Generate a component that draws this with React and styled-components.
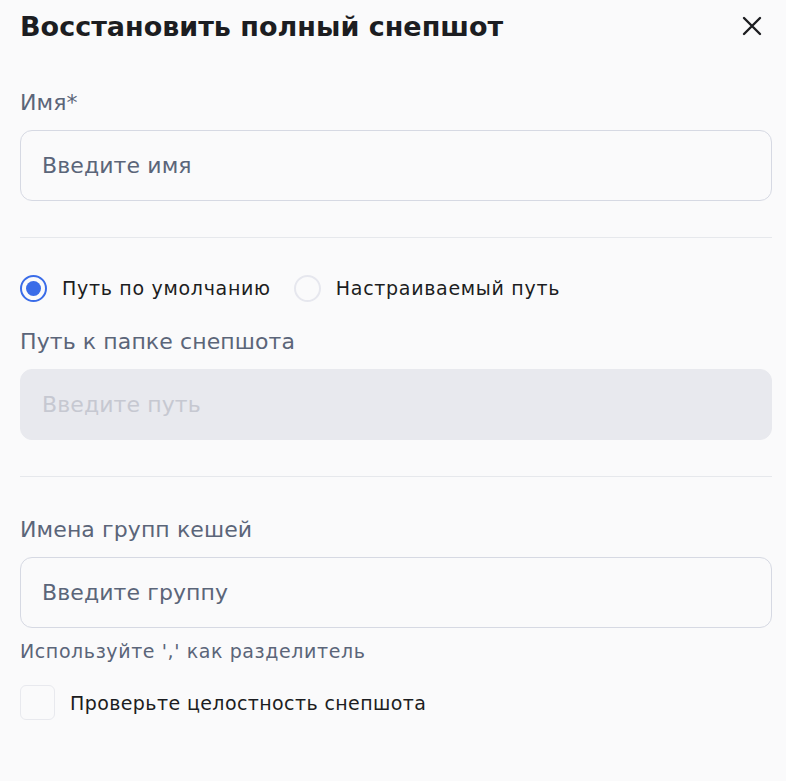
import { useState } from "react";
import styled, { createGlobalStyle } from "styled-components";

const GlobalStyle = createGlobalStyle`
  html, body {
    margin: 0;
    padding: 0;
    background: #fafafb;
    font-family: "DejaVu Sans", "Open Sans", sans-serif;
  }
`;

const Dialog = styled.div`
  width: 786px;
  min-height: 781px;
  box-sizing: border-box;
  padding: 0 14px 0 20px;
  background: #fafafb;
`;

const Header = styled.div`
  display: flex;
  align-items: center;
  justify-content: space-between;
  height: 52px;
`;

const Title = styled.h2`
  margin: 0;
  font-size: 27px;
  font-weight: 700;
  color: #1c1d21;
`;

const CloseButton = styled.button`
  display: flex;
  align-items: center;
  justify-content: center;
  width: 40px;
  height: 40px;
  padding: 0;
  border: none;
  background: none;
  color: #1c1d21;
  cursor: pointer;
`;

const Field = styled.div`
  display: flex;
  flex-direction: column;
  margin-top: ${(p) => p.$top || 0}px;
`;

const Label = styled.label`
  font-size: 22px;
  letter-spacing: 0.1px;
  color: #5b6579;
  line-height: 28px;
  margin-bottom: 13px;
`;

const Input = styled.input`
  box-sizing: border-box;
  width: 100%;
  height: 71px;
  padding: 0 21px;
  border: 1px solid ${(p) => (p.disabled ? "#e8e9ee" : "#d6d9e3")};
  border-radius: 12px;
  background: ${(p) => (p.disabled ? "#e8e9ee" : "#fafafb")};
  font-family: inherit;
  font-size: 22px;
  letter-spacing: 0.1px;
  outline: none;

  &::placeholder {
    color: ${(p) => (p.disabled ? "#c6c8d1" : "#5b6579")};
  }
`;

const Divider = styled.hr`
  margin: ${(p) => p.$top}px 0 0;
  border: none;
  border-top: 1px solid #e6e8ec;
`;

const RadioGroup = styled.div`
  display: flex;
  align-items: center;
  gap: 23px;
  margin-top: 36px;
  height: 28px;
`;

const RadioOption = styled.label`
  display: flex;
  align-items: center;
  gap: 15px;
  font-size: 19px;
  letter-spacing: 0.7px;
  color: #1c1d21;
  cursor: pointer;
`;

const RadioDot = styled.span`
  box-sizing: border-box;
  width: 27px;
  height: 27px;
  border-radius: 50%;
  border: 2px solid ${(p) => (p.$checked ? "#3a6ce8" : "#e6e7ee")};
  display: flex;
  align-items: center;
  justify-content: center;

  &::after {
    content: "";
    width: 15px;
    height: 15px;
    border-radius: 50%;
    background: ${(p) => (p.$checked ? "#3a6ce8" : "transparent")};
  }
`;

const Hint = styled.div`
  margin-top: 12px;
  font-size: 19px;
  letter-spacing: 0.6px;
  line-height: 22px;
  color: #5b6579;
`;

const CheckRow = styled.label`
  display: flex;
  align-items: center;
  gap: 15px;
  margin-top: 23px;
  font-size: 19px;
  letter-spacing: 0.4px;
  color: #1c1d21;
  cursor: pointer;
`;

const CheckBox = styled.span`
  box-sizing: border-box;
  width: 35px;
  height: 35px;
  border: 1.5px solid #e8e9ee;
  border-radius: 6px;
  background: #fafafb;
`;

const App = () => {
  const [mode, setMode] = useState("default");

  return (
    <>
      <GlobalStyle />
      <Dialog>
        <Header>
          <Title>Восстановить полный снепшот</Title>
          <CloseButton aria-label="close">
            <svg width="20" height="20" viewBox="0 0 20 20" fill="none">
              <path
                d="M2 2L18 18M18 2L2 18"
                stroke="currentColor"
                strokeWidth="2.4"
                strokeLinecap="round"
              />
            </svg>
          </CloseButton>
        </Header>

        <Field $top={37}>
          <Label>Имя*</Label>
          <Input placeholder="Введите имя" />
        </Field>

        <Divider $top={36} />

        <RadioGroup>
          <RadioOption onClick={() => setMode("default")}>
            <RadioDot $checked={mode === "default"} />
            Путь по умолчанию
          </RadioOption>
          <RadioOption onClick={() => setMode("custom")}>
            <RadioDot $checked={mode === "custom"} />
            Настраиваемый путь
          </RadioOption>
        </RadioGroup>

        <Field $top={26}>
          <Label>Путь к папке снепшота</Label>
          <Input placeholder="Введите путь" disabled={mode === "default"} />
        </Field>

        <Divider $top={36} />

        <Field $top={39}>
          <Label>Имена групп кешей</Label>
          <Input placeholder="Введите группу" />
        </Field>

        <Hint>Используйте ',' как разделитель</Hint>

        <CheckRow>
          <CheckBox />
          Проверьте целостность снепшота
        </CheckRow>
      </Dialog>
    </>
  );
};

export default App;
